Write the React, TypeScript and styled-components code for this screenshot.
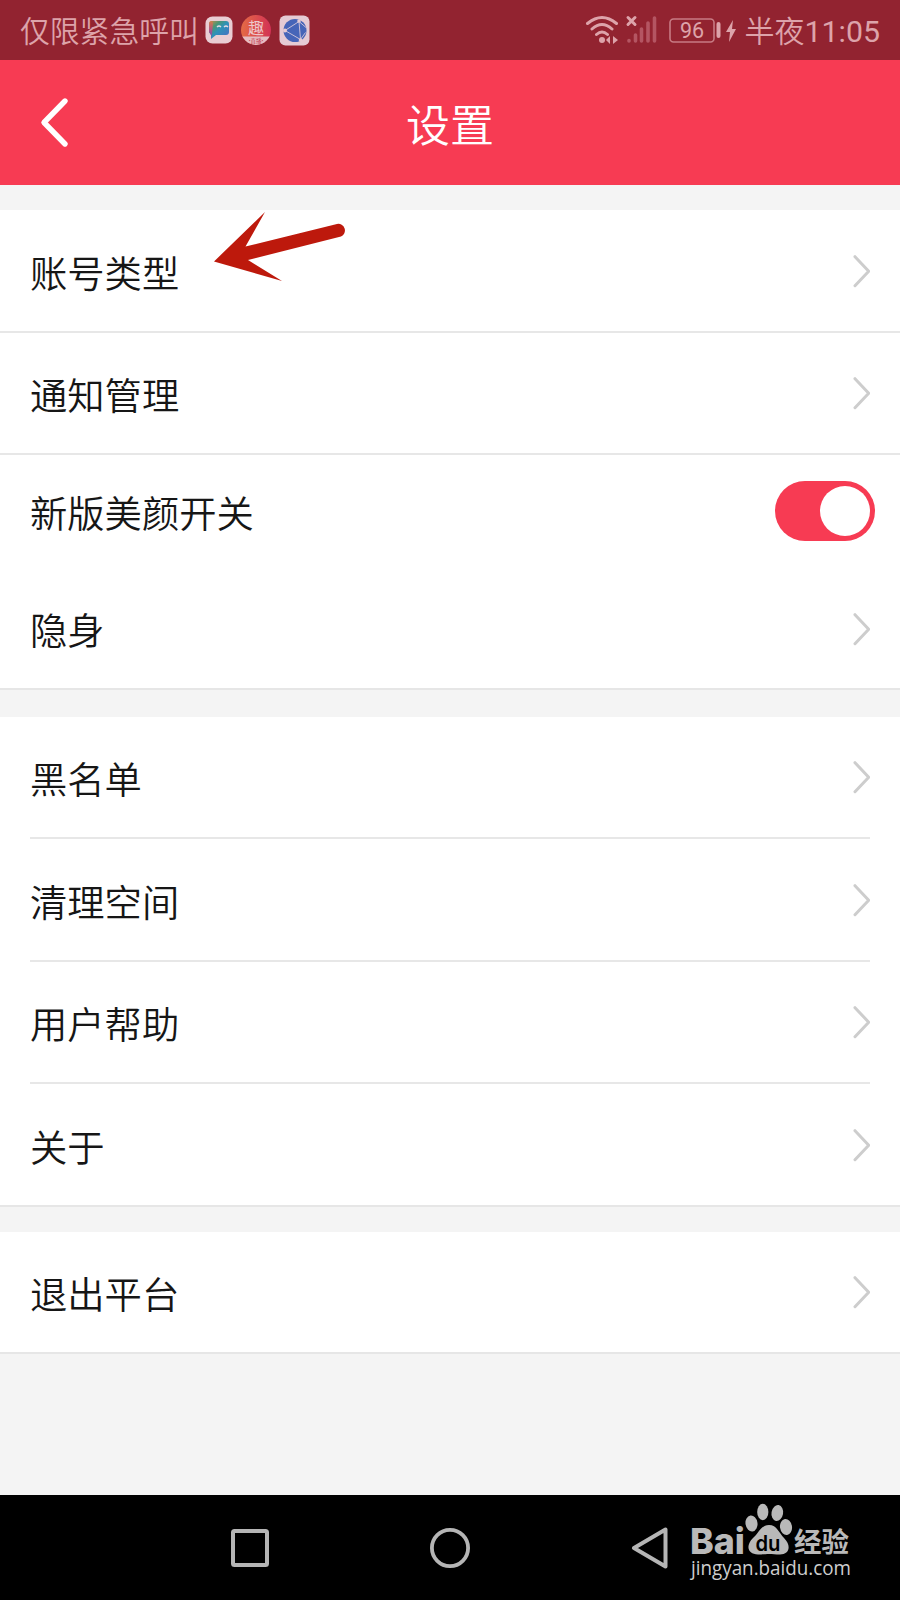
import React from "react";
import styled, { createGlobalStyle } from "styled-components";

const Global = createGlobalStyle`
  * { box-sizing: border-box; }
  body { margin: 0; background: #f4f4f4; }
`;

const Screen = styled.div`
  width: 900px;
  height: 1600px;
  display: flex;
  flex-direction: column;
  overflow: hidden;
  background: #f4f4f4;
  color: #161616;
  font-family: Roboto, "Noto Sans CJK SC", sans-serif;
`;

const StatusBar = styled.header`
  height: 60px;
  flex: none;
  display: flex;
  align-items: center;
  justify-content: space-between;
  padding: 0 20px;
  background: #922330;
  color: #dda3aa;
`;

const StatusGroup = styled.div`
  display: flex;
  align-items: center;
  height: 60px;
`;

const StatusText = styled.span`
  font-size: 29.8px;
  line-height: 60px;
  font-weight: 350;
  white-space: nowrap;
  padding-top: 4px;
`;

const Clock = styled(StatusText)`
  font-size: 30px;
  margin-left: 7px;
`;

const Digits = styled.span`
  font-size: 30.3px;
  font-weight: 400;
`;

const AppIcons = styled.div`
  display: flex;
  align-items: center;
  gap: 8px;
  margin-left: 6px;
`;

const TitleBar = styled.div`
  height: 125px;
  flex: none;
  display: grid;
  grid-template-columns: 100px 1fr 100px;
  align-items: center;
  background: #f73b53;
  color: #fff;
`;

const BackButton = styled.button`
  border: 0;
  padding: 0 0 0 36px;
  background: none;
  height: 125px;
  display: flex;
  align-items: center;
`;

const Title = styled.h1`
  margin: 0;
  padding-top: 8px;
  text-align: center;
  font-size: 44px;
  line-height: 60px;
  font-weight: 350;
`;

const Section = styled.section<{ $top: number }>`
  margin-top: ${(p) => p.$top}px;
  flex: none;
  background: #fff;
  border-bottom: 2px solid #e6e6e6;
`;

const Row = styled.div<{ $height: number; $line?: "full" | "inset" }>`
  height: ${(p) => p.$height}px;
  margin: ${(p) => (p.$line === "inset" ? "0 30px" : "0")};
  padding: ${(p) => (p.$line === "inset" ? "0" : "0 30px")};
  border-bottom: ${(p) => (p.$line ? "2px solid #e7e7e7" : "0")};
  display: flex;
  align-items: center;
  justify-content: space-between;
`;

const Label = styled.span<{ $drop?: number }>`
  font-size: 37.3px;
  line-height: 54px;
  font-weight: 350;
  padding-top: ${(p) => p.$drop ?? 8}px;
  white-space: nowrap;
`;

const LabelGroup = styled.div`
  position: relative;
  display: flex;
`;

const Pointer = styled.svg`
  position: absolute;
  left: 180px;
  top: -32px;
`;

const Toggle = styled.button`
  width: 100px;
  height: 60px;
  margin-right: -5px;
  margin-top: -3px;
  border: 0;
  border-radius: 30px;
  padding: 5px;
  display: flex;
  justify-content: flex-end;
  background: #f73b53;
`;

const Knob = styled.span`
  width: 50px;
  height: 50px;
  border-radius: 50%;
  background: #fff;
`;

const NavBar = styled.nav`
  height: 105px;
  margin-top: auto;
  flex: none;
  display: flex;
  align-items: center;
  padding-left: 230px;
  background: #000;
`;

const NavIcon = styled.svg<{ $gap: number }>`
  flex: none;
  margin-right: ${(p) => p.$gap}px;
`;

const Brand = styled.svg`
  flex: none;
  margin-top: -9px;
  overflow: visible;
`;

const Chevron = () => (
  <svg width="20" height="34" viewBox="0 0 20 34" fill="none">
    <path d="M5 2.700 18.700 17.200 5 31.700" stroke="#cdcdcd" strokeWidth="3" strokeLinecap="round" strokeLinejoin="round" />
  </svg>
);

const ChatAppIcon = () => (
  <svg width="28" height="28" viewBox="0 0 28 28">
    <defs>
      <linearGradient id="chat" x1="0" y1="0" x2="1" y2="1">
        <stop offset="0" stopColor="#d48a45" />
        <stop offset=".28" stopColor="#4c9674" />
        <stop offset=".5" stopColor="#2f92b8" />
        <stop offset="1" stopColor="#4b69c4" />
      </linearGradient>
      <linearGradient id="edge" x1="0" y1="0" x2="0" y2="1">
        <stop offset="0" stopColor="#cf8148" />
        <stop offset=".5" stopColor="#b45584" />
        <stop offset="1" stopColor="#6b51b9" />
      </linearGradient>
    </defs>
    <rect x=".5" y=".5" width="27" height="27" rx="7" fill="#e9cdd3" />
    <path d="M7 5h14a3 3 0 0 1 3 3v8a3 3 0 0 1-3 3H11l-5 4V19L4 16V8a3 3 0 0 1 3-3Z" fill="url(#chat)" />
    <path d="M4 8q0-3 3-3l1 2-1 11-1 4V19l-2-3Z" fill="url(#edge)" />
    <path d="M12 11q2-2 4 0M19 11q2-2 4 0" stroke="#e6dce3" strokeWidth="1.3" fill="none" />
  </svg>
);

const LiveAppIcon = () => (
  <svg width="30" height="30" viewBox="0 0 30 30">
    <defs>
      <linearGradient id="live" x1="0" y1="0" x2="1" y2="0">
        <stop offset="0" stopColor="#e56b45" />
        <stop offset="1" stopColor="#d23255" />
      </linearGradient>
      <clipPath id="liveClip"><circle cx="15" cy="15" r="15" /></clipPath>
    </defs>
    <g clipPath="url(#liveClip)">
      <rect width="30" height="30" fill="url(#live)" />
      <rect y="21.5" width="30" height="9" fill="#e5bdc3" />
      <text x="15" y="18.5" textAnchor="middle" fontSize="16" fill="#edc7cb">趣</text>
      <text x="15" y="27.500" textAnchor="middle" fontSize="5.500" fill="#c63b50">•直播•</text>
    </g>
  </svg>
);

const GlobeAppIcon = () => (
  <svg width="31" height="31" viewBox="0 0 31 31">
    <rect x=".5" y=".5" width="30" height="30" rx="6" fill="#e5cbd4" />
    <circle cx="16" cy="15.500" r="11.500" fill="#4665b8" />
    <path d="M6 15.500 20 6.500 21.500 24.500 6 15.500M20 6.500l7 6M21.500 24.500l5-7" stroke="#c9bfd8" strokeWidth="1" fill="none" />
    <g fill="#e5cbd4"><circle cx="6" cy="15.500" r="2" /><circle cx="20" cy="6" r="1.800" /><circle cx="21.500" cy="25" r="1.800" /></g>
  </svg>
);

const SignalIcons = () => (
  <svg width="154" height="32" viewBox="0 0 154 32" fill="none">
    <g stroke="#dda3aa" strokeWidth="3" strokeLinecap="round">
      <path d="M3.500 9.500Q18-2.500 32.500 9.500M8 15Q18 6 28 15M12.500 20.500q5.500-5 11 0" />
      <path d="m44 3.500 7 7m0-7-7 7" />
    </g>
    <circle cx="18" cy="26" r="3" fill="#dda3aa" />
    <path d="m22 26 4-4v8ZM34 26l-5-4v8Z" fill="#dda3aa" />
    <g stroke="#b45562" strokeWidth="3.600" strokeLinecap="round">
      <path d="M45 26.500v.500M51.500 21v6M57.500 15v12M64 9v18M70.500 4v23" />
    </g>
    <rect x="86" y="5" width="44" height="23" rx="3.500" stroke="#c77b84" strokeWidth="1.600" />
    <path d="M134.500 10v12" stroke="#dda3aa" strokeWidth="4" strokeLinecap="round" />
    <text x="108" y="24" textAnchor="middle" fontSize="21.500" fill="#dda3aa">96</text>
    <path d="m149 6-7 12h4l-1 10 7-13h-4Z" fill="#dda3aa" />
  </svg>
);

const BrandLogo = () => (
  <Brand width="168" height="84" viewBox="0 0 168 84" fill="#b9b9b9">
    <text x="0" y="53" fontFamily="Inter, sans-serif" fontWeight="800" fontSize="36" textLength="55" lengthAdjust="spacingAndGlyphs">Bai</text>
    <ellipse cx="61.500" cy="22.500" rx="6" ry="8" transform="rotate(-8 61.500 22.500)" />
    <ellipse cx="72.800" cy="11" rx="5.600" ry="8.200" />
    <ellipse cx="87.300" cy="12" rx="5.800" ry="8" transform="rotate(10 87.300 12)" />
    <ellipse cx="96" cy="26" rx="6" ry="8" transform="rotate(-8 96 26)" />
    <path d="M79 24c8 0 10 8 15 13 8 8 5 16.500-4 16.500-5 0-7-.5-11-.5s-6 .5-11 .5c-10 0-13-8.500-5-16.500 6-5 8-13 16-13Z" />
    <text x="65.500" y="49.500" fontFamily="Inter, sans-serif" fontWeight="600" fontSize="22" fill="#000" textLength="25" lengthAdjust="spacingAndGlyphs">du</text>
    <text x="104" y="51" fontFamily="Noto Sans CJK SC, sans-serif" fontWeight="700" fontSize="27.500">经验</text>
    <text x="1" y="74" fontFamily="Open Sans, sans-serif" fontSize="20" textLength="160" lengthAdjust="spacingAndGlyphs" fill="#cecece">jingyan.baidu.com</text>
  </Brand>
);

export default function App() {
  return (
    <Screen>
      <Global />
      <StatusBar>
        <StatusGroup>
          <StatusText>仅限紧急呼叫</StatusText>
          <AppIcons>
            <ChatAppIcon />
            <LiveAppIcon />
            <GlobeAppIcon />
          </AppIcons>
        </StatusGroup>
        <StatusGroup>
          <SignalIcons />
          <Clock>半夜<Digits>11:05</Digits></Clock>
        </StatusGroup>
      </StatusBar>
      <TitleBar>
        <BackButton aria-label="返回">
          <svg width="36" height="52" viewBox="0 0 36 52" fill="none">
            <path d="M29 4 8 25.500 29 47" stroke="#fff" strokeWidth="5.400" strokeLinecap="round" strokeLinejoin="round" />
          </svg>
        </BackButton>
        <Title>设置</Title>
      </TitleBar>
      <Section $top={25}>
        <Row $height={123} $line="full">
          <LabelGroup>
            <Label>账号类型</Label>
            <Pointer width="140" height="76" viewBox="210 208 140 76">
              <path d="M214 261.500 265 212 245.500 246.500 337 224a6.600 6.600 0 0 1 4 12.500L248 260l34 21Z" fill="#bd190c" />
            </Pointer>
          </LabelGroup>
          <Chevron />
        </Row>
        <Row $height={122} $line="full"><Label>通知管理</Label><Chevron /></Row>
        <Row $height={114}>
          <Label $drop={5}>新版美颜开关</Label>
          <Toggle role="switch" aria-checked="true"><Knob /></Toggle>
        </Row>
        <Row $height={119}><Label $drop={6}>隐身</Label><Chevron /></Row>
      </Section>
      <Section $top={27}>
        <Row $height={122} $line="inset"><Label>黑名单</Label><Chevron /></Row>
        <Row $height={123} $line="inset"><Label>清理空间</Label><Chevron /></Row>
        <Row $height={122} $line="inset"><Label>用户帮助</Label><Chevron /></Row>
        <Row $height={121}><Label>关于</Label><Chevron /></Row>
      </Section>
      <Section $top={25}>
        <Row $height={120}><Label>退出平台</Label><Chevron /></Row>
      </Section>
      <NavBar>
        <NavIcon $gap={160} width="40" height="42" viewBox="0 0 40 42" fill="none">
          <rect x="3" y="4" width="34" height="34" rx="1.500" stroke="#b5b5b5" strokeWidth="4" />
        </NavIcon>
        <NavIcon $gap={160} width="40" height="42" viewBox="-1 0 42 42" fill="none">
          <circle cx="20" cy="21" r="19" stroke="#b5b5b5" strokeWidth="4" />
        </NavIcon>
        <NavIcon $gap={20} width="40" height="42" viewBox="0 0 40 42" fill="none">
          <path d="M4 21 35.500 2.500v37Z" stroke="#b5b5b5" strokeWidth="4" strokeLinejoin="round" />
        </NavIcon>
        <BrandLogo />
      </NavBar>
    </Screen>
  );
}
